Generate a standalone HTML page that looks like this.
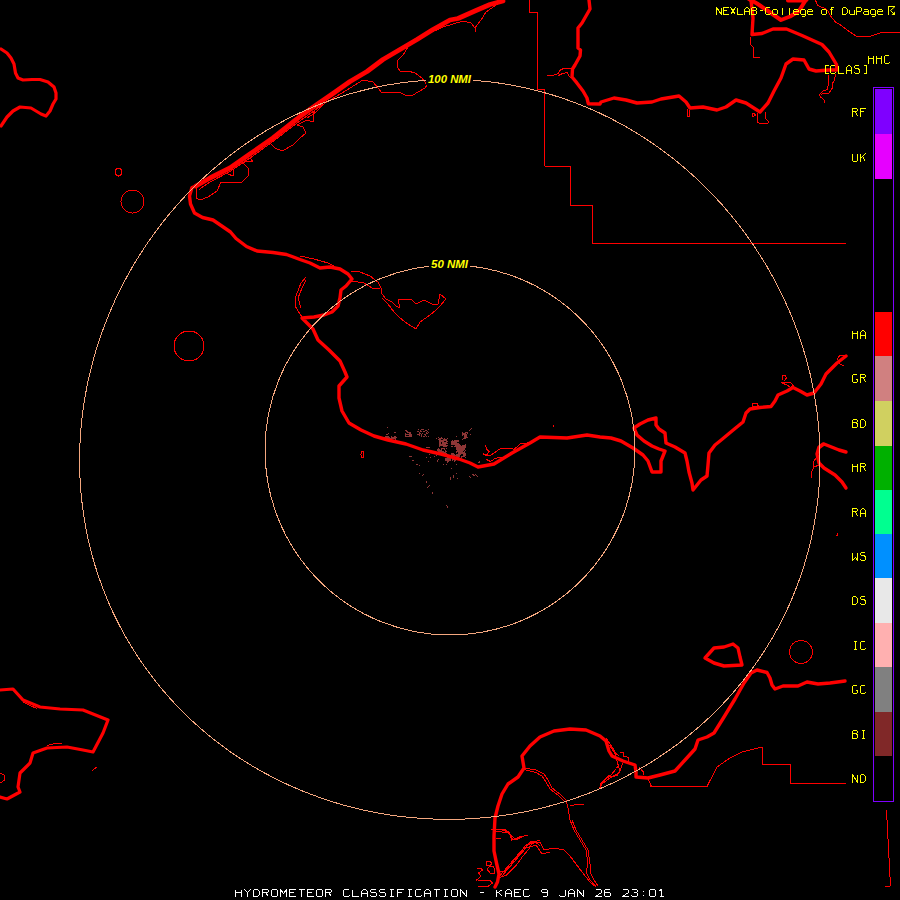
<!DOCTYPE html>
<html><head><meta charset="utf-8">
<style>
html,body{margin:0;padding:0;background:#000;width:900px;height:900px;overflow:hidden}
svg{display:block}
.tk{fill:none;stroke:#ff0000;stroke-width:3.4;stroke-linejoin:round;stroke-linecap:round}
.tn{fill:none;stroke:#ff0000;stroke-width:1;stroke-linejoin:round;shape-rendering:crispEdges}
</style></head><body>
<svg width="900" height="900" viewBox="0 0 900 900">
<rect width="900" height="900" fill="#000"/>
<!-- radar echoes -->
<g id="echo" fill="#8e3636"><rect x="439" y="439" width="2" height="7"/><rect x="441" y="440" width="3" height="2"/><rect x="442" y="442" width="4" height="4"/><rect x="444" y="439" width="2" height="2"/><rect x="446" y="441" width="1" height="3"/><rect x="440" y="444" width="6" height="2"/><rect x="443" y="446" width="4" height="1"/><rect x="451" y="441" width="6" height="2"/><rect x="452" y="443" width="5" height="2"/><rect x="454" y="440" width="2" height="1"/><rect x="455" y="445" width="2" height="2"/><rect x="457" y="441" width="1" height="1"/><rect x="456" y="445" width="5" height="3"/><rect x="457" y="448" width="7" height="3"/><rect x="458" y="451" width="5" height="3"/><rect x="456" y="454" width="4" height="3"/><rect x="460" y="446" width="4" height="2"/><rect x="463" y="448" width="2" height="2"/><rect x="459" y="449" width="2" height="2"/><rect x="437" y="449" width="3" height="2"/><rect x="439" y="450" width="3" height="2"/><rect x="441" y="451" width="3" height="2"/><rect x="443" y="452" width="3" height="2"/><rect x="445" y="453" width="2" height="1"/><rect x="451" y="453" width="3" height="3"/><rect x="453" y="454" width="2" height="2"/><rect x="445" y="458" width="2" height="3"/><rect x="447" y="457" width="1" height="4"/><rect x="448" y="459" width="1" height="2"/><rect x="450" y="458" width="1" height="3"/><rect x="452" y="458" width="1" height="3"/><rect x="454" y="458" width="1" height="2"/><rect x="463" y="433" width="3" height="2"/><rect x="464" y="435" width="2" height="3"/><rect x="465" y="432" width="1" height="1"/><rect x="464" y="438" width="1" height="1"/><rect x="469" y="430" width="1" height="1"/><rect x="470" y="429" width="1" height="1"/><rect x="471" y="428" width="1" height="1"/><rect x="470" y="434" width="1" height="1"/><rect x="426" y="432" width="1" height="2"/><rect x="427" y="431" width="1" height="1"/><rect x="436" y="438" width="1" height="1"/><rect x="438" y="437" width="1" height="1"/><rect x="441" y="437" width="1" height="1"/><rect x="456" y="436" width="1" height="1"/><rect x="462" y="439" width="1" height="1"/><rect x="426" y="457" width="1" height="1"/><rect x="430" y="457" width="1" height="1"/><rect x="428" y="461" width="1" height="1"/><rect x="429" y="454" width="1" height="1"/><rect x="434" y="456" width="1" height="1"/><rect x="436" y="455" width="1" height="1"/><rect x="437" y="460" width="1" height="2"/><rect x="438" y="459" width="1" height="1"/><rect x="443" y="464" width="1" height="1"/><rect x="446" y="464" width="1" height="1"/><rect x="451" y="468" width="1" height="1"/><rect x="456" y="464" width="1" height="1"/><rect x="456" y="473" width="1" height="1"/><rect x="453" y="475" width="1" height="3"/><rect x="450" y="477" width="1" height="3"/><rect x="457" y="478" width="1" height="1"/><rect x="470" y="477" width="1" height="1"/><rect x="473" y="474" width="1" height="1"/><rect x="474" y="475" width="1" height="1"/><rect x="476" y="475" width="1" height="1"/><rect x="477" y="476" width="1" height="1"/><rect x="478" y="462" width="2" height="1"/><rect x="479" y="461" width="1" height="1"/><rect x="387" y="427" width="1" height="1"/><rect x="386" y="434" width="2" height="1"/><rect x="388" y="433" width="1" height="1"/><rect x="388" y="436" width="1" height="1"/><rect x="384" y="437" width="4" height="2"/><rect x="394" y="432" width="2" height="1"/><rect x="392" y="437" width="3" height="2"/><rect x="394" y="438" width="2" height="1"/><rect x="405" y="430" width="2" height="1"/><rect x="406" y="431" width="2" height="1"/><rect x="407" y="432" width="3" height="1"/><rect x="405" y="434" width="6" height="1"/><rect x="409" y="433" width="2" height="3"/><rect x="407" y="436" width="4" height="1"/><rect x="411" y="436" width="1" height="1"/><rect x="417" y="431" width="2" height="1"/><rect x="419" y="432" width="1" height="1"/><rect x="420" y="433" width="1" height="1"/><rect x="419" y="434" width="1" height="1"/><rect x="421" y="436" width="1" height="1"/><rect x="423" y="429" width="1" height="1"/><rect x="422" y="433" width="1" height="1"/><rect x="424" y="431" width="1" height="1"/><rect x="425" y="430" width="1" height="1"/><rect x="426" y="432" width="1" height="1"/><rect x="425" y="434" width="1" height="1"/><rect x="427" y="433" width="1" height="1"/><rect x="428" y="432" width="1" height="1"/><rect x="436" y="438" width="1" height="1"/><rect x="438" y="439" width="1" height="1"/><rect x="439" y="442" width="1" height="3"/><rect x="426" y="447" width="4" height="1"/><rect x="437" y="450" width="3" height="1"/><rect x="409" y="456" width="3" height="1"/><rect x="412" y="460" width="2" height="1"/><rect x="416" y="464" width="2" height="1"/><rect x="419" y="465" width="1" height="1"/><rect x="419" y="473" width="1" height="1"/><rect x="422" y="475" width="1" height="1"/><rect x="423" y="474" width="1" height="1"/><rect x="426" y="481" width="1" height="2"/><rect x="427" y="487" width="1" height="1"/><rect x="428" y="486" width="1" height="1"/><rect x="429" y="485" width="1" height="1"/><rect x="432" y="492" width="1" height="2"/><rect x="446" y="505" width="1" height="1"/><rect x="447" y="506" width="1" height="2"/><rect x="450" y="477" width="1" height="3"/><rect x="453" y="475" width="1" height="3"/><rect x="456" y="473" width="1" height="1"/><rect x="457" y="478" width="1" height="1"/><rect x="469" y="476" width="1" height="1"/><rect x="470" y="477" width="1" height="1"/><rect x="472" y="474" width="1" height="1"/><rect x="473" y="475" width="1" height="1"/><rect x="475" y="474" width="1" height="1"/><rect x="476" y="475" width="1" height="1"/><rect x="553" y="425" width="1" height="2"/><rect x="439" y="438" width="1" height="1"/><rect x="439" y="439" width="1" height="1"/><rect x="439" y="440" width="1" height="1"/><rect x="439" y="443" width="1" height="1"/><rect x="439" y="444" width="1" height="1"/><rect x="439" y="446" width="1" height="1"/><rect x="440" y="438" width="1" height="1"/><rect x="440" y="440" width="1" height="1"/><rect x="440" y="442" width="1" height="1"/><rect x="440" y="444" width="1" height="1"/><rect x="441" y="438" width="1" height="1"/><rect x="441" y="441" width="1" height="1"/><rect x="441" y="444" width="1" height="1"/><rect x="441" y="445" width="1" height="1"/><rect x="442" y="438" width="1" height="1"/><rect x="442" y="443" width="1" height="1"/><rect x="442" y="445" width="1" height="1"/><rect x="443" y="439" width="1" height="1"/><rect x="443" y="440" width="1" height="1"/><rect x="443" y="441" width="1" height="1"/><rect x="443" y="443" width="1" height="1"/><rect x="443" y="445" width="1" height="1"/><rect x="443" y="446" width="1" height="1"/><rect x="444" y="438" width="1" height="1"/><rect x="444" y="439" width="1" height="1"/><rect x="445" y="439" width="1" height="1"/><rect x="445" y="445" width="1" height="1"/><rect x="446" y="439" width="1" height="1"/><rect x="446" y="440" width="1" height="1"/><rect x="446" y="443" width="1" height="1"/><rect x="446" y="445" width="1" height="1"/><rect x="446" y="446" width="1" height="1"/><rect x="447" y="438" width="1" height="1"/><rect x="447" y="441" width="1" height="1"/><rect x="447" y="443" width="1" height="1"/><rect x="447" y="445" width="1" height="1"/><rect x="451" y="441" width="1" height="1"/><rect x="451" y="443" width="1" height="1"/><rect x="451" y="444" width="1" height="1"/><rect x="451" y="446" width="1" height="1"/><rect x="452" y="440" width="1" height="1"/><rect x="452" y="441" width="1" height="1"/><rect x="452" y="443" width="1" height="1"/><rect x="452" y="444" width="1" height="1"/><rect x="452" y="446" width="1" height="1"/><rect x="453" y="442" width="1" height="1"/><rect x="453" y="443" width="1" height="1"/><rect x="453" y="444" width="1" height="1"/><rect x="454" y="443" width="1" height="1"/><rect x="454" y="444" width="1" height="1"/><rect x="454" y="446" width="1" height="1"/><rect x="455" y="440" width="1" height="1"/><rect x="455" y="442" width="1" height="1"/><rect x="455" y="443" width="1" height="1"/><rect x="455" y="444" width="1" height="1"/><rect x="455" y="445" width="1" height="1"/><rect x="456" y="440" width="1" height="1"/><rect x="456" y="443" width="1" height="1"/><rect x="456" y="445" width="1" height="1"/><rect x="457" y="440" width="1" height="1"/><rect x="457" y="443" width="1" height="1"/><rect x="457" y="444" width="1" height="1"/><rect x="458" y="440" width="1" height="1"/><rect x="458" y="441" width="1" height="1"/><rect x="458" y="443" width="1" height="1"/><rect x="458" y="444" width="1" height="1"/><rect x="458" y="445" width="1" height="1"/><rect x="458" y="446" width="1" height="1"/><rect x="456" y="444" width="1" height="1"/><rect x="456" y="445" width="1" height="1"/><rect x="456" y="446" width="1" height="1"/><rect x="456" y="448" width="1" height="1"/><rect x="456" y="449" width="1" height="1"/><rect x="456" y="451" width="1" height="1"/><rect x="456" y="452" width="1" height="1"/><rect x="456" y="454" width="1" height="1"/><rect x="456" y="455" width="1" height="1"/><rect x="456" y="456" width="1" height="1"/><rect x="457" y="444" width="1" height="1"/><rect x="457" y="445" width="1" height="1"/><rect x="457" y="446" width="1" height="1"/><rect x="457" y="448" width="1" height="1"/><rect x="457" y="450" width="1" height="1"/><rect x="457" y="451" width="1" height="1"/><rect x="457" y="454" width="1" height="1"/><rect x="457" y="455" width="1" height="1"/><rect x="457" y="456" width="1" height="1"/><rect x="457" y="457" width="1" height="1"/><rect x="458" y="444" width="1" height="1"/><rect x="458" y="447" width="1" height="1"/><rect x="458" y="448" width="1" height="1"/><rect x="458" y="452" width="1" height="1"/><rect x="458" y="453" width="1" height="1"/><rect x="458" y="454" width="1" height="1"/><rect x="458" y="456" width="1" height="1"/><rect x="458" y="457" width="1" height="1"/><rect x="459" y="444" width="1" height="1"/><rect x="459" y="445" width="1" height="1"/><rect x="459" y="446" width="1" height="1"/><rect x="459" y="448" width="1" height="1"/><rect x="459" y="449" width="1" height="1"/><rect x="459" y="453" width="1" height="1"/><rect x="459" y="456" width="1" height="1"/><rect x="460" y="446" width="1" height="1"/><rect x="460" y="447" width="1" height="1"/><rect x="460" y="448" width="1" height="1"/><rect x="460" y="449" width="1" height="1"/><rect x="460" y="450" width="1" height="1"/><rect x="460" y="451" width="1" height="1"/><rect x="460" y="452" width="1" height="1"/><rect x="460" y="454" width="1" height="1"/><rect x="461" y="446" width="1" height="1"/><rect x="461" y="447" width="1" height="1"/><rect x="461" y="449" width="1" height="1"/><rect x="461" y="450" width="1" height="1"/><rect x="461" y="452" width="1" height="1"/><rect x="461" y="453" width="1" height="1"/><rect x="461" y="456" width="1" height="1"/><rect x="461" y="457" width="1" height="1"/><rect x="462" y="445" width="1" height="1"/><rect x="462" y="447" width="1" height="1"/><rect x="462" y="448" width="1" height="1"/><rect x="462" y="449" width="1" height="1"/><rect x="462" y="451" width="1" height="1"/><rect x="462" y="456" width="1" height="1"/><rect x="463" y="445" width="1" height="1"/><rect x="463" y="446" width="1" height="1"/><rect x="463" y="447" width="1" height="1"/><rect x="463" y="448" width="1" height="1"/><rect x="463" y="449" width="1" height="1"/><rect x="463" y="450" width="1" height="1"/><rect x="463" y="452" width="1" height="1"/><rect x="463" y="453" width="1" height="1"/><rect x="463" y="454" width="1" height="1"/><rect x="463" y="455" width="1" height="1"/><rect x="463" y="456" width="1" height="1"/><rect x="464" y="445" width="1" height="1"/><rect x="464" y="446" width="1" height="1"/><rect x="464" y="447" width="1" height="1"/><rect x="464" y="448" width="1" height="1"/><rect x="464" y="449" width="1" height="1"/><rect x="464" y="451" width="1" height="1"/><rect x="464" y="452" width="1" height="1"/><rect x="464" y="453" width="1" height="1"/><rect x="464" y="454" width="1" height="1"/><rect x="464" y="455" width="1" height="1"/><rect x="464" y="456" width="1" height="1"/><rect x="465" y="444" width="1" height="1"/><rect x="465" y="445" width="1" height="1"/><rect x="465" y="446" width="1" height="1"/><rect x="465" y="447" width="1" height="1"/><rect x="465" y="450" width="1" height="1"/><rect x="465" y="453" width="1" height="1"/><rect x="465" y="454" width="1" height="1"/><rect x="465" y="455" width="1" height="1"/><rect x="465" y="457" width="1" height="1"/><rect x="437" y="450" width="1" height="1"/><rect x="437" y="453" width="1" height="1"/><rect x="437" y="454" width="1" height="1"/><rect x="438" y="448" width="1" height="1"/><rect x="438" y="451" width="1" height="1"/><rect x="438" y="454" width="1" height="1"/><rect x="439" y="449" width="1" height="1"/><rect x="440" y="450" width="1" height="1"/><rect x="440" y="452" width="1" height="1"/><rect x="440" y="453" width="1" height="1"/><rect x="441" y="448" width="1" height="1"/><rect x="441" y="449" width="1" height="1"/><rect x="441" y="450" width="1" height="1"/><rect x="441" y="452" width="1" height="1"/><rect x="441" y="453" width="1" height="1"/><rect x="442" y="448" width="1" height="1"/><rect x="443" y="448" width="1" height="1"/><rect x="443" y="452" width="1" height="1"/><rect x="444" y="448" width="1" height="1"/><rect x="444" y="449" width="1" height="1"/><rect x="444" y="452" width="1" height="1"/><rect x="444" y="453" width="1" height="1"/><rect x="444" y="454" width="1" height="1"/><rect x="445" y="450" width="1" height="1"/><rect x="445" y="451" width="1" height="1"/><rect x="445" y="452" width="1" height="1"/><rect x="445" y="453" width="1" height="1"/><rect x="445" y="454" width="1" height="1"/><rect x="446" y="448" width="1" height="1"/><rect x="446" y="451" width="1" height="1"/><rect x="446" y="453" width="1" height="1"/><rect x="447" y="454" width="1" height="1"/><rect x="447" y="455" width="1" height="1"/><rect x="447" y="461" width="1" height="1"/><rect x="447" y="462" width="1" height="1"/><rect x="448" y="455" width="1" height="1"/><rect x="448" y="457" width="1" height="1"/><rect x="448" y="458" width="1" height="1"/><rect x="448" y="461" width="1" height="1"/><rect x="449" y="458" width="1" height="1"/><rect x="449" y="459" width="1" height="1"/><rect x="449" y="460" width="1" height="1"/><rect x="450" y="455" width="1" height="1"/><rect x="450" y="457" width="1" height="1"/><rect x="450" y="459" width="1" height="1"/><rect x="452" y="458" width="1" height="1"/><rect x="452" y="459" width="1" height="1"/><rect x="453" y="456" width="1" height="1"/><rect x="453" y="457" width="1" height="1"/><rect x="453" y="458" width="1" height="1"/><rect x="453" y="459" width="1" height="1"/><rect x="454" y="455" width="1" height="1"/><rect x="454" y="457" width="1" height="1"/><rect x="454" y="460" width="1" height="1"/><rect x="454" y="461" width="1" height="1"/><rect x="455" y="455" width="1" height="1"/><rect x="455" y="459" width="1" height="1"/><rect x="455" y="460" width="1" height="1"/><rect x="405" y="430" width="1" height="1"/><rect x="405" y="433" width="1" height="1"/><rect x="405" y="435" width="1" height="1"/><rect x="405" y="436" width="1" height="1"/><rect x="406" y="431" width="1" height="1"/><rect x="406" y="434" width="1" height="1"/><rect x="406" y="436" width="1" height="1"/><rect x="407" y="432" width="1" height="1"/><rect x="407" y="436" width="1" height="1"/><rect x="408" y="434" width="1" height="1"/><rect x="408" y="436" width="1" height="1"/><rect x="409" y="433" width="1" height="1"/><rect x="409" y="436" width="1" height="1"/><rect x="410" y="432" width="1" height="1"/><rect x="410" y="434" width="1" height="1"/><rect x="410" y="435" width="1" height="1"/><rect x="411" y="434" width="1" height="1"/><rect x="411" y="435" width="1" height="1"/><rect x="411" y="436" width="1" height="1"/><rect x="417" y="434" width="1" height="1"/><rect x="418" y="429" width="1" height="1"/><rect x="418" y="431" width="1" height="1"/><rect x="418" y="434" width="1" height="1"/><rect x="419" y="432" width="1" height="1"/><rect x="419" y="433" width="1" height="1"/><rect x="419" y="434" width="1" height="1"/><rect x="419" y="435" width="1" height="1"/><rect x="420" y="430" width="1" height="1"/><rect x="420" y="431" width="1" height="1"/><rect x="421" y="429" width="1" height="1"/><rect x="421" y="431" width="1" height="1"/><rect x="421" y="434" width="1" height="1"/><rect x="421" y="435" width="1" height="1"/><rect x="422" y="429" width="1" height="1"/><rect x="423" y="431" width="1" height="1"/><rect x="423" y="436" width="1" height="1"/><rect x="424" y="434" width="1" height="1"/><rect x="424" y="436" width="1" height="1"/><rect x="425" y="435" width="1" height="1"/><rect x="426" y="430" width="1" height="1"/><rect x="426" y="432" width="1" height="1"/><rect x="426" y="433" width="1" height="1"/><rect x="426" y="436" width="1" height="1"/><rect x="427" y="431" width="1" height="1"/><rect x="428" y="429" width="1" height="1"/><rect x="428" y="436" width="1" height="1"/><rect x="462" y="432" width="1" height="1"/><rect x="462" y="433" width="1" height="1"/><rect x="462" y="434" width="1" height="1"/><rect x="462" y="435" width="1" height="1"/><rect x="463" y="434" width="1" height="1"/><rect x="463" y="438" width="1" height="1"/><rect x="464" y="434" width="1" height="1"/><rect x="464" y="435" width="1" height="1"/><rect x="464" y="438" width="1" height="1"/><rect x="465" y="432" width="1" height="1"/><rect x="465" y="433" width="1" height="1"/><rect x="465" y="435" width="1" height="1"/><rect x="465" y="437" width="1" height="1"/><rect x="465" y="438" width="1" height="1"/><rect x="466" y="432" width="1" height="1"/><rect x="466" y="434" width="1" height="1"/><rect x="466" y="435" width="1" height="1"/><rect x="466" y="436" width="1" height="1"/><rect x="466" y="437" width="1" height="1"/><rect x="467" y="432" width="1" height="1"/><rect x="467" y="433" width="1" height="1"/><rect x="467" y="437" width="1" height="1"/><rect x="384" y="437" width="1" height="1"/><rect x="384" y="439" width="1" height="1"/><rect x="385" y="436" width="1" height="1"/><rect x="385" y="438" width="1" height="1"/><rect x="386" y="436" width="1" height="1"/><rect x="386" y="437" width="1" height="1"/><rect x="386" y="438" width="1" height="1"/><rect x="387" y="436" width="1" height="1"/><rect x="388" y="436" width="1" height="1"/><rect x="388" y="437" width="1" height="1"/><rect x="388" y="438" width="1" height="1"/><rect x="389" y="437" width="1" height="1"/><rect x="389" y="438" width="1" height="1"/><rect x="390" y="438" width="1" height="1"/><rect x="390" y="439" width="1" height="1"/><rect x="391" y="436" width="1" height="1"/><rect x="391" y="437" width="1" height="1"/><rect x="391" y="438" width="1" height="1"/><rect x="391" y="439" width="1" height="1"/><rect x="392" y="438" width="1" height="1"/><rect x="394" y="436" width="1" height="1"/><rect x="394" y="437" width="1" height="1"/><rect x="395" y="436" width="1" height="1"/><rect x="395" y="437" width="1" height="1"/><rect x="395" y="439" width="1" height="1"/><rect x="396" y="437" width="1" height="1"/></g>
<!-- thin lines -->
<g class="tn" id="thin">
<path d="M307,118 L315,113 L325,103 L342,93 L363,80 L373,82 L378,88 L382,93 L400,92.5 L407,96 L413,95 L418,92 L425,88 L427,85 L422,78 L415,73 L408,71 L400,71 L397.5,67 L398,60 L403,55 L408,47 L417,40 L430,33 L443,27 L463,21 L471,23 L475,28 L475,32 M475,28 L481,20 L486,12 L499,3"/>
<path d="M197,185 L196,198 L200,200 L208,197 L217,191 L221,182 L228,182.5 L242,182 L248,176 L248,168 L243,163 L247,161 L253,162 L250,157.5"/>
<path d="M227,168 L233,170 L233,176 L228,174 Z"/>
<path d="M270,143 L275,148 L282,151 L293,145 L300,138 L306,133 L303,127 L297,125 L307,120 L313,122 L313,115 L315,110 L323,103"/>
<path d="M306,277 L301,283 L296,296 L295,306 L300,314 L302,317 M301,308 L298,298 L302,288 L306,280"/>
<path d="M300,256 L314,259 L328,263 L334,266"/>
<path d="M351,271 L360,272 L370,276 L378,282 L381,288 L382,294 L386,299 L392,302 L396,306 L400,308 L398,300 L402,299 L412,300 L416,304 L424,300 L432,304 L438,304 L440,294 L446,299 L440,306 L436,310 L430,315 L420,322 L416,329 L408,324 L400,318 L394,312 L388,304 L382,298"/>
<path d="M351,281 L364,283 L372,288 L380,289"/>
<path d="M529.5,0 V12.5 H537.5 V89.5 H544.5 V166 H570.5 V205.5 H592.5 V243.5 H846"/>
<path d="M547,75.5 L553,75.5 L558.5,73.5 L559.5,70.5 L562.5,69 L572,68.5 M558.5,75.5 L562.5,73.5 L567,72.5 L569.5,76.5 L570.5,78"/>
<path d="M815.5,0 L817.5,5.5 L824,8 L828,11 L831,16.5 L835.5,22 L840,24.5 L847,30 L856,36 L868,37 L880,33 L900,32"/>
<path d="M751,37 L750,44 L754,48 L753,57 L760,57"/>
<circle cx="132.5" cy="201.5" r="11.5"/>
<circle cx="189" cy="346" r="15"/>
<circle cx="801" cy="652" r="11.5"/>
<ellipse cx="118.5" cy="172" rx="3" ry="4"/>
<ellipse cx="362.5" cy="454.5" rx="1.5" ry="3"/>
<path d="M524,768 L536,770 L544,774 L548,780 L552,788 L560,794 L566,800 L568,808 L570,820 L574,830 L580,840 L586,850 L588,864 L586,872 L590,880 L596,886"/>
<path d="M570,806 L578,804 L584,804"/>
<path d="M496,829 L506,830 L512,836 L516,840 L524,836 L528,835"/>
<path d="M498,878 L510,864 L522,850 L532,842 L540,842 L544,850 L554,848 L564,850 L570,856 L576,864 L582,872 L590,882 L596,887"/>
<path d="M502,876 L514,862 L526,848 L536,845 L542,854 L550,852"/>
<path d="M606,738 L614,750 L620,772 L610,778 L602,784 L600,788"/>
<path d="M650,787 L707,786.5 L717,767 L730,758 L742,752 L762,747 L763,764.5 L790.5,764.5 L791,783.5 L846,783.5"/>
<path d="M886.5,810 L890.5,886 L885,887"/>
</g>
<g class="tn" id="thin2">
<path d="M524,769.5 L536,772.5 L542,776 L546,782 L550,789 L558,795 L564,801"/>
<path d="M572,820 L576,830 L582,840 L588,850 L590,864 L590,872 L594,880 L598,886"/>
<path d="M199,189.5 L210,182 L230,171.5 L250,158 L273,141.5 L297,123 L323,104.5"/>

<path d="M23,702 L30,705.5 L37,708.5"/>
<path d="M47,745.5 L55,743.5 L62,743.5"/>
<path d="M846,356 L840,355 L837.5,359 L840,364 L844,366"/>
<path d="M648,779 L651.5,786.5"/>

<path d="M828,75 L829,81 L828,86 L827,89.5 L823,91 L819.5,94.5 L820.5,97 L824,99.5 L824.5,103.5 M835.5,74.5 L834.5,80.5 L832,84 L832,88.5 L829,93 L823,93.5 L821,95"/>
<path d="M688,109 L687,116 L689.5,116 L690,110"/>
<path d="M758,113.5 L757.5,122 L760.5,124 L768,123 L768,121 L765,117.5 L765,112 M752,114 L754,113 L755.5,115 L753,116.5 Z"/>
<path d="M485,445 L487,449.5 L489,451.5 L486,456 L483.5,454 L487,455.5 L490.5,455.5 L500.5,448.5 L511.5,448.5 L514,449.5 L520.5,443.5 L526,443.5 L531.5,441.5 M486.5,459.5 L490.5,461.5 L495,458.5 L501.5,457"/>
<path d="M782,380 L782.5,376 L785,375 L786.5,378 L784,381 M781.5,383 L790.5,382.5 L793,385.5 L790.5,387.5 L786.5,384.5 L782.5,383.5"/>
<path d="M752,404 L757,403.5 L758.5,406.5 L753,406.5 Z"/>
<path d="M609.5,745 L613,750.5 L616.5,754 L619,756 M620.5,752.5 L623,752 L623,756 L628.5,757.5 L629,761 L624,761 M639,767 L644,772.5 L643.5,775.5"/>
<path d="M622.5,763.5 L620.5,770 L617.5,775 L611.5,777 L609,775.5 L604.5,780 L601,783.5 L599.5,789.5 M619,764 L616.5,768.5 L611,775 L602.5,781.5 L600,787"/>
<path d="M491.5,829.5 L502,830 L509,832 L511,835.5 L513,840 L516.5,838.5 L520.5,836.5 L528.5,835.5 M495.5,831.5 L507.5,832.5 L510,835 L512,840.5"/>
<path d="M496,838 L500.5,838"/>
<path d="M499.5,872 L505,871.5 L510.5,866 L513.5,860.5 L520.5,853.5 L524.5,846.5 L530.5,842 L540,840.5 M499.5,877.5 L506.5,875 L516.5,865 L523,856 L529,849 L532,843.5 L536,842.5 L540,845.5"/>
<path d="M486,862 L490,861 L492,864 L489,866 L486,865 Z M489,867 L493,866 L495,870 L494,874 L490,873 L487,869 Z"/>
<path d="M477,869 L481,868 L482.5,870 L478.5,873 L481,876 L478,879 L476,880.5 M478,881 L484,880.5 L490,880.5 L492.5,883 L488,886.5 L482,886.5 L478,887"/>
<path d="M553.5,425 L553.5,427"/>
<path d="M92,771 L96.5,767"/>
<path d="M0.5,773 L4,775 L4.5,780 L0.5,783"/>
<path d="M811.5,478 L812,471 L814,467 L813.5,462 L816,458 L816.5,455 M814,467 L819,465"/>
<path d="M837,533 L838,535.5 L836.5,536"/>
</g>
<!-- thick coastlines -->
<g class="tk" id="thick">
<path style="stroke-width:3.2" d="M1,49 L7,53 L11,58 L14,64 L15.5,73 L18,78 L23,80 L32,79.5 L40,79.5 L48,82 L54,87 L56,93 L56,99 L53,104 L50,111 L46,116 L41,114 L31,108 L20,107 L13,111 L7,117 L1,126"/>
<path style="stroke-width:4.8" d="M503,1 L490,4.5 L476,10.5 L458,18.5 L450,20 L433,29.5 L417,39.5 L400,49.5 L383,59.5 L367,71.5 L350,81.5 L333,93.5 L317,104.5 L300,116.5 L297,119 L273,138 L250,154 L230,168 L210,178 L196,186"/>
<path d="M196,186 L192,187.5 L189.5,196 L190.5,204 L194.5,213 L202.5,217.5 L213,220 L222.5,226.5 L230.5,232 L236,238.5 L246.5,246.5 L257,251 L273,252.5 L286.5,254.5 L300,259.5 L310,263 L320,268 L330,267 L340,269 L348,274 L352,279 L346,286 L341,290 L340,298 L338,306 L332,312 L324,315 L314,317 L302,318 L304,320 L310,326 L313,329 L318,340 L329,350 L340,361 L345,372 L347,377 L339,386 L339,398 L342,411 L349,423 L361,430 L374,436 L388,440 L406,444 L423,450 L441,454 L459,459 L470,463 L478,467 L494,464 L512,453 L530,443 L540,437 L567,438 L587,435 L600,437 L611,438 L621,441 L633,448 L643,455 L648,461 L652,472 L661,472 L661,461 L665,451 L659,449 L652,446 L644,441 L637,435 L634,428 L640,424 L648,420 L656,418 L656,425 L659,429 L665,433 L666,443 L675,447 L685,453 L687,461 L689,472 L692,483 L693,490 L701,480 L707,476 L708,465 L709,453 L715,445 L720,441 L732,431 L743,422 L746,413 L750,409 L760,407.5 L771,406.5 L775,401 L778,395 L787,391 L793,387.5 L800,391 L807,395 L814,393 L821,384 L826,374 L837,363 L846,356"/>
<path d="M589,0 L590,9 L582,23 L578,28 L578,48 L580.5,50 L580,56 L575,65 L572.5,69 L572,77 L576.7,82.7 L583,91 L587,98 L588.3,103.7 L600,104 L601,102 L614,98 L626,100 L637,103 L652,102 L661,99 L679,96 L686,102 L690,108 L703,107 L717,110 L726,107 L736,100 L746,103 L760,112 L768,103 L774,91 L781,78 L786,64 L793,59 L804,60 L809,69 L816,71 L829,70 L837,70 L836.5,64.5 L829,52 L822,44.5 L802,35.5 L786.5,29 L773,29 L762,33.5 L752,34.5 L753,18 L751,0"/>
<path style="stroke-width:4" d="M749,-1 L757,3.5 L768,11 L781,20 L790,16.5 L799,11 L804.5,2 L807,-1 M788,0.5 L806,0.5"/>
<path d="M820,447 L824,444 L839,450 L846,452"/>
<path d="M823,444 L819,447 L817,454 L819,463 L824,468 L835,475 L842,482 L846,488"/>
<path d="M495,887 L497.5,882 L499,874 L496.5,863 L494,851 L494,836 L495,818 L498,806 L502,794 L508,784 L518,777 L524,768 L522,756 L530,746 L540,737 L554,731 L570,729 L586,730 L600,736 L606,741 L609,751 L612,756 L623,761 L635,765 L636,772 L636,777 L648,778 L660,775 L675,771 L685,760 L695,749 L698,740 L707,737 L714,733 L724,717 L735,699 L744,683 L751,673 L757,670 L767,672.5 L770,678 L772,685 L775,689 L783,686 L798,686 L807,682 L818,684 L830,683 L845,681"/>
<path d="M705,658 L714,648 L724,647 L733,644 L738,648 L740,657 L742,665 L724,666 L714,663 Z"/>
<path style="stroke-width:3.2" d="M0,690 L13,689 L23,700 L40,707 L60,709 L83,710 L108,720 L103,733 L93,752 L83,750 L67,747 L47,748 L33,753 L30,763 L20,773 L18,787 L20,792 L7,799 L0,797"/>
</g>
<!-- range rings -->
<g fill="none" stroke="#f4a77f" stroke-width="1" shape-rendering="crispEdges">
<path d="M79.7,450.0 L80.3,437.1 L81.3,424.2 L82.8,411.4 L84.7,398.7 L87.0,386.0 L89.8,373.4 L93.0,361.0 L96.5,348.6 L100.5,336.4 L104.9,324.4 L109.7,312.5 L114.8,300.8 L120.4,289.2 L126.3,277.9 L132.5,266.7 L139.2,255.8 L146.1,245.0 L153.5,234.6 L161.1,224.3 L169.1,214.3 L177.4,204.6 L186.1,195.1 L195.0,186.0 L204.3,177.1 L213.9,168.6 L223.7,160.4 L233.8,152.5 L244.2,144.9 L254.9,137.7 L265.8,130.9 L276.9,124.5 L288.3,118.4 L299.9,112.8 L311.6,107.6 L323.6,102.8 L335.8,98.4 L348.0,94.4 L360.5,91.0 L373.0,87.9 L385.7,85.3 L398.5,83.2 L411.3,81.6 L424.2,80.4 L437.1,79.7 L450.0,79.5 L462.9,79.8 L475.8,80.5 L488.7,81.7 L501.5,83.4 L514.3,85.6 L526.9,88.2 L539.4,91.3 L551.9,94.8 L564.1,98.8 L576.2,103.2 L588.2,108.0 L599.9,113.2 L611.5,118.9 L622.8,124.9 L634.0,131.4 L644.8,138.2 L655.5,145.4 L665.8,152.9 L676.0,160.8 L685.8,169.0 L695.3,177.5 L704.6,186.4 L713.6,195.5 L722.2,204.9 L730.5,214.6 L738.5,224.6 L746.2,234.8 L753.5,245.3 L760.5,256.0 L767.2,266.9 L773.4,278.0 L779.4,289.4 L784.9,300.9 L790.1,312.6 L794.9,324.5 L799.2,336.5 L803.2,348.7 L806.8,361.0 L810.0,373.5 L812.7,386.0 L815.0,398.7 L816.9,411.4 L818.4,424.2 L819.4,437.1 L819.9,450.0 L820.0,462.9 L819.7,475.9 L818.9,488.8 L817.6,501.7 L815.8,514.5 L813.6,527.3 L811.0,540.0 L807.8,552.6 L804.2,565.1 L800.2,577.4 L795.6,589.6 L790.7,601.7 L785.3,613.5 L779.4,625.2 L773.1,636.6 L766.4,647.7 L759.3,658.6 L751.8,669.3 L743.9,679.7 L735.7,689.7 L727.0,699.5 L718.1,708.9 L708.8,718.0 L699.1,726.7 L689.2,735.1 L679.0,743.1 L668.5,750.7 L657.7,758.0 L646.8,764.9 L635.5,771.3 L624.1,777.4 L612.5,783.1 L600.7,788.4 L588.7,793.3 L576.6,797.7 L564.3,801.8 L551.9,805.4 L539.4,808.6 L526.8,811.4 L514.1,813.8 L501.4,815.7 L488.6,817.3 L475.8,818.4 L462.9,819.1 L450.0,819.4 L437.1,819.2 L424.2,818.6 L411.4,817.6 L398.5,816.2 L385.8,814.4 L373.0,812.1 L360.4,809.4 L347.8,806.3 L335.4,802.7 L323.1,798.7 L310.9,794.3 L298.8,789.5 L287.0,784.3 L275.3,778.6 L263.8,772.6 L252.5,766.1 L241.4,759.2 L230.6,752.0 L220.1,744.3 L209.8,736.3 L199.8,727.8 L190.2,719.1 L180.8,709.9 L171.8,700.4 L163.2,690.6 L154.9,680.5 L147.1,670.1 L139.6,659.4 L132.5,648.4 L125.8,637.2 L119.6,625.7 L113.7,614.0 L108.4,602.1 L103.5,590.0 L99.0,577.8 L95.0,565.4 L91.4,552.8 L88.3,540.2 L85.7,527.4 L83.6,514.6 L81.9,501.7 L80.6,488.8 L79.9,475.9 L79.5,462.9Z"/>
<circle cx="450" cy="450" r="185"/>
</g>
<rect x="426" y="74" width="47" height="11" fill="#000"/>
<rect x="429" y="259" width="41" height="10" fill="#000"/>
<text x="428" y="83" font-family="Liberation Sans" font-weight="bold" font-style="italic" font-size="11" fill="#ffff00" textLength="43" lengthAdjust="spacingAndGlyphs">100 NMI</text>
<text x="431" y="268" font-family="Liberation Sans" font-weight="bold" font-style="italic" font-size="11" fill="#ffff00" textLength="37" lengthAdjust="spacingAndGlyphs">50 NMI</text>
<!-- legend -->
<g>
<rect x="873.5" y="87.5" width="20" height="714" fill="none" stroke="#7f00ff" stroke-width="1.2" shape-rendering="crispEdges"/>
<rect x="875" y="89" width="17" height="45" fill="#7f00ff"/>
<rect x="875" y="134" width="17" height="45" fill="#e600ff"/>
<rect x="875" y="312" width="17" height="44" fill="#ff0000"/>
<rect x="875" y="356" width="17" height="45" fill="#d08080"/>
<rect x="875" y="401" width="17" height="45" fill="#d0d060"/>
<rect x="875" y="446" width="17" height="44" fill="#00b000"/>
<rect x="875" y="490" width="17" height="44" fill="#00ff90"/>
<rect x="875" y="534" width="17" height="44" fill="#0090ff"/>
<rect x="875" y="578" width="17" height="45" fill="#e8e8e8"/>
<rect x="875" y="623" width="17" height="44" fill="#ffb0b0"/>
<rect x="875" y="667" width="17" height="45" fill="#808080"/>
<rect x="875" y="712" width="17" height="44" fill="#802828"/>
</g>
<path d="M888.5,6 V15 M888.5,6.5 H895 L890.5,10.5 L894,14" fill="none" stroke="#ffff00" stroke-width="1"/>
<path d="M891.5,15 H895 V11.5 Z" fill="#ffff00"/>
<g id="txt"><g fill="none" stroke="#ffffff" stroke-width="1" shape-rendering="crispEdges"><path d="M235.5,889.5 L235.5,896.5 M241.5,889.5 L241.5,896.5 M235.5,892.5 L241.5,892.5 M244.5,889.5 L247.5,892.5 L250.5,889.5 M247.5,892.5 L247.5,896.5 M253.5,889.5 L257.5,889.5 L259.5,891.5 L259.5,894.5 L257.5,896.5 L253.5,896.5 L253.5,889.5 M262.5,896.5 L262.5,889.5 L267.5,889.5 L268.5,890.5 L268.5,891.5 L267.5,892.5 L262.5,892.5 M265.5,892.5 L268.5,896.5 M272.5,889.5 L276.5,889.5 L277.5,890.5 L277.5,895.5 L276.5,896.5 L272.5,896.5 L271.5,895.5 L271.5,890.5 L272.5,889.5 M280.5,896.5 L280.5,889.5 L283.5,893.5 L286.5,889.5 L286.5,896.5 M295.5,889.5 L289.5,889.5 L289.5,896.5 L295.5,896.5 M289.5,892.5 L293.5,892.5 M298.5,889.5 L304.5,889.5 M301.5,889.5 L301.5,896.5 M313.5,889.5 L307.5,889.5 L307.5,896.5 L313.5,896.5 M307.5,892.5 L311.5,892.5 M317.5,889.5 L321.5,889.5 L322.5,890.5 L322.5,895.5 L321.5,896.5 L317.5,896.5 L316.5,895.5 L316.5,890.5 L317.5,889.5 M325.5,896.5 L325.5,889.5 L330.5,889.5 L331.5,890.5 L331.5,891.5 L330.5,892.5 L325.5,892.5 M328.5,892.5 L331.5,896.5 M349.5,890.5 L348.5,889.5 L344.5,889.5 L343.5,890.5 L343.5,895.5 L344.5,896.5 L348.5,896.5 L349.5,895.5 M352.5,889.5 L352.5,896.5 L358.5,896.5 M361.5,896.5 L361.5,891.5 L363.5,889.5 L365.5,889.5 L367.5,891.5 L367.5,896.5 M361.5,893.5 L367.5,893.5 M376.5,890.5 L375.5,889.5 L371.5,889.5 L370.5,890.5 L370.5,891.5 L371.5,892.5 L375.5,892.5 L376.5,893.5 L376.5,895.5 L375.5,896.5 L371.5,896.5 L370.5,895.5 M385.5,890.5 L384.5,889.5 L380.5,889.5 L379.5,890.5 L379.5,891.5 L380.5,892.5 L384.5,892.5 L385.5,893.5 L385.5,895.5 L384.5,896.5 L380.5,896.5 L379.5,895.5 M389.5,889.5 L393.5,889.5 M391.5,889.5 L391.5,896.5 M389.5,896.5 L393.5,896.5 M403.5,889.5 L397.5,889.5 L397.5,896.5 M397.5,892.5 L401.5,892.5 M407.5,889.5 L411.5,889.5 M409.5,889.5 L409.5,896.5 M407.5,896.5 L411.5,896.5 M421.5,890.5 L420.5,889.5 L416.5,889.5 L415.5,890.5 L415.5,895.5 L416.5,896.5 L420.5,896.5 L421.5,895.5 M424.5,896.5 L424.5,891.5 L426.5,889.5 L428.5,889.5 L430.5,891.5 L430.5,896.5 M424.5,893.5 L430.5,893.5 M433.5,889.5 L439.5,889.5 M436.5,889.5 L436.5,896.5 M443.5,889.5 L447.5,889.5 M445.5,889.5 L445.5,896.5 M443.5,896.5 L447.5,896.5 M452.5,889.5 L456.5,889.5 L457.5,890.5 L457.5,895.5 L456.5,896.5 L452.5,896.5 L451.5,895.5 L451.5,890.5 L452.5,889.5 M460.5,896.5 L460.5,889.5 L466.5,896.5 L466.5,889.5 M479.5,892.5 L483.5,892.5 M496.5,889.5 L496.5,896.5 M502.5,889.5 L496.5,893.5 M498.5,892.5 L502.5,896.5 M505.5,896.5 L505.5,891.5 L507.5,889.5 L509.5,889.5 L511.5,891.5 L511.5,896.5 M505.5,893.5 L511.5,893.5 M520.5,889.5 L514.5,889.5 L514.5,896.5 L520.5,896.5 M514.5,892.5 L518.5,892.5 M529.5,890.5 L528.5,889.5 L524.5,889.5 L523.5,890.5 L523.5,895.5 L524.5,896.5 L528.5,896.5 L529.5,895.5 M547.5,892.5 L542.5,892.5 L541.5,891.5 L541.5,890.5 L542.5,889.5 L546.5,889.5 L547.5,890.5 L547.5,895.5 L546.5,896.5 L542.5,896.5 M565.5,889.5 L565.5,895.5 L564.5,896.5 L560.5,896.5 L559.5,895.5 M568.5,896.5 L568.5,891.5 L570.5,889.5 L572.5,889.5 L574.5,891.5 L574.5,896.5 M568.5,893.5 L574.5,893.5 M577.5,896.5 L577.5,889.5 L583.5,896.5 L583.5,889.5 M595.5,890.5 L596.5,889.5 L600.5,889.5 L601.5,890.5 L601.5,892.5 L595.5,896.5 L601.5,896.5 M609.5,889.5 L605.5,889.5 L604.5,890.5 L604.5,895.5 L605.5,896.5 L609.5,896.5 L610.5,895.5 L610.5,893.5 L609.5,892.5 L604.5,892.5 M622.5,890.5 L623.5,889.5 L627.5,889.5 L628.5,890.5 L628.5,892.5 L622.5,896.5 L628.5,896.5 M631.5,890.5 L632.5,889.5 L636.5,889.5 L637.5,890.5 L637.5,891.5 L636.5,892.5 L633.5,892.5 M636.5,892.5 L637.5,893.5 L637.5,895.5 L636.5,896.5 L632.5,896.5 L631.5,895.5 M650.5,889.5 L654.5,889.5 L655.5,890.5 L655.5,895.5 L654.5,896.5 L650.5,896.5 L649.5,895.5 L649.5,890.5 L650.5,889.5 M659.5,890.5 L661.5,889.5 L661.5,896.5 M659.5,896.5 L663.5,896.5"/><rect x="643" y="891" width="1" height="1" stroke="none" fill="#ffffff"/><rect x="643" y="895" width="1" height="1" stroke="none" fill="#ffffff"/></g>
<g fill="none" stroke="#ffff00" stroke-width="1" shape-rendering="crispEdges"><path d="M852.5,116.5 L852.5,108.5 L856.5,108.5 L857.5,109.5 L857.5,110.5 L856.5,111.5 L852.5,111.5 M855.5,111.5 L857.5,116.5 M865.5,108.5 L860.5,108.5 L860.5,116.5 M860.5,111.5 L863.5,111.5"/><path d="M852.5,153.5 L852.5,160.5 L853.5,161.5 L856.5,161.5 L857.5,160.5 L857.5,153.5 M860.5,153.5 L860.5,161.5 M865.5,153.5 L860.5,158.5 M862.5,156.5 L865.5,161.5"/><path d="M852.5,330.5 L852.5,338.5 M857.5,330.5 L857.5,338.5 M852.5,333.5 L857.5,333.5 M860.5,338.5 L860.5,332.5 L862.5,330.5 L863.5,330.5 L865.5,332.5 L865.5,338.5 M860.5,335.5 L865.5,335.5"/><path d="M857.5,375.5 L856.5,374.5 L853.5,374.5 L852.5,375.5 L852.5,381.5 L853.5,382.5 L856.5,382.5 L857.5,381.5 L857.5,379.5 L855.5,379.5 M860.5,382.5 L860.5,374.5 L864.5,374.5 L865.5,375.5 L865.5,376.5 L864.5,377.5 L860.5,377.5 M863.5,377.5 L865.5,382.5"/><path d="M852.5,419.5 L856.5,419.5 L857.5,420.5 L857.5,421.5 L856.5,422.5 L852.5,422.5 M856.5,422.5 L857.5,424.5 L857.5,426.5 L856.5,427.5 L852.5,427.5 L852.5,419.5 M860.5,419.5 L863.5,419.5 L865.5,421.5 L865.5,425.5 L863.5,427.5 L860.5,427.5 L860.5,419.5"/><path d="M852.5,463.5 L852.5,471.5 M857.5,463.5 L857.5,471.5 M852.5,466.5 L857.5,466.5 M860.5,471.5 L860.5,463.5 L864.5,463.5 L865.5,464.5 L865.5,465.5 L864.5,466.5 L860.5,466.5 M863.5,466.5 L865.5,471.5"/><path d="M852.5,516.5 L852.5,508.5 L856.5,508.5 L857.5,509.5 L857.5,510.5 L856.5,511.5 L852.5,511.5 M855.5,511.5 L857.5,516.5 M860.5,516.5 L860.5,510.5 L862.5,508.5 L863.5,508.5 L865.5,510.5 L865.5,516.5 M860.5,513.5 L865.5,513.5"/><path d="M852.5,552.5 L852.5,560.5 L855.5,557.5 L857.5,560.5 L857.5,552.5 M865.5,553.5 L864.5,552.5 L861.5,552.5 L860.5,553.5 L860.5,554.5 L861.5,555.5 L864.5,555.5 L865.5,557.5 L865.5,559.5 L864.5,560.5 L861.5,560.5 L860.5,559.5"/><path d="M852.5,596.5 L855.5,596.5 L857.5,598.5 L857.5,602.5 L855.5,604.5 L852.5,604.5 L852.5,596.5 M865.5,597.5 L864.5,596.5 L861.5,596.5 L860.5,597.5 L860.5,598.5 L861.5,599.5 L864.5,599.5 L865.5,601.5 L865.5,603.5 L864.5,604.5 L861.5,604.5 L860.5,603.5"/><path d="M853.5,641.5 L856.5,641.5 M855.5,641.5 L855.5,649.5 M853.5,649.5 L856.5,649.5 M865.5,642.5 L864.5,641.5 L861.5,641.5 L860.5,642.5 L860.5,648.5 L861.5,649.5 L864.5,649.5 L865.5,648.5"/><path d="M857.5,686.5 L856.5,685.5 L853.5,685.5 L852.5,686.5 L852.5,692.5 L853.5,693.5 L856.5,693.5 L857.5,692.5 L857.5,690.5 L855.5,690.5 M865.5,686.5 L864.5,685.5 L861.5,685.5 L860.5,686.5 L860.5,692.5 L861.5,693.5 L864.5,693.5 L865.5,692.5"/><path d="M852.5,730.5 L856.5,730.5 L857.5,731.5 L857.5,732.5 L856.5,733.5 L852.5,733.5 M856.5,733.5 L857.5,735.5 L857.5,737.5 L856.5,738.5 L852.5,738.5 L852.5,730.5 M861.5,730.5 L864.5,730.5 M863.5,730.5 L863.5,738.5 M861.5,738.5 L864.5,738.5"/><path d="M852.5,782.5 L852.5,774.5 L857.5,782.5 L857.5,774.5 M860.5,774.5 L863.5,774.5 L865.5,776.5 L865.5,780.5 L863.5,782.5 L860.5,782.5 L860.5,774.5"/><path d="M868.5,55.5 L868.5,63.5 M873.5,55.5 L873.5,63.5 M868.5,58.5 L873.5,58.5 M876.5,55.5 L876.5,63.5 M881.5,55.5 L881.5,63.5 M876.5,58.5 L881.5,58.5 M889.5,56.5 L888.5,55.5 L885.5,55.5 L884.5,56.5 L884.5,62.5 L885.5,63.5 L888.5,63.5 L889.5,62.5"/><path d="M835.5,66.5 L834.5,65.5 L831.5,65.5 L830.5,66.5 L830.5,72.5 L831.5,73.5 L834.5,73.5 L835.5,72.5 M838.5,65.5 L838.5,73.5 L843.5,73.5 M846.5,73.5 L846.5,67.5 L848.5,65.5 L849.5,65.5 L851.5,67.5 L851.5,73.5 M846.5,70.5 L851.5,70.5 M859.5,66.5 L858.5,65.5 L855.5,65.5 L854.5,66.5 L854.5,67.5 L855.5,68.5 L858.5,68.5 L859.5,70.5 L859.5,72.5 L858.5,73.5 L855.5,73.5 L854.5,72.5"/><path d="M828.5,65.5 L825.5,65.5 L825.5,73.5 L828.5,73.5 M863.5,65.5 L866.5,65.5 L866.5,73.5 L863.5,73.5"/><path d="M716.5,14.5 L716.5,7.5 L721.5,14.5 L721.5,7.5 M728.5,7.5 L723.5,7.5 L723.5,14.5 L728.5,14.5 M723.5,10.5 L726.5,10.5 M730.5,7.5 L735.5,14.5 M735.5,7.5 L730.5,14.5 M737.5,7.5 L737.5,14.5 L742.5,14.5 M744.5,14.5 L744.5,9.5 L746.5,7.5 L747.5,7.5 L749.5,9.5 L749.5,14.5 M744.5,11.5 L749.5,11.5 M751.5,7.5 L755.5,7.5 L756.5,8.5 L756.5,9.5 L755.5,10.5 L751.5,10.5 M755.5,10.5 L756.5,11.5 L756.5,13.5 L755.5,14.5 L751.5,14.5 L751.5,7.5 M759.5,10.5 L762.5,10.5 M770.5,8.5 L769.5,7.5 L766.5,7.5 L765.5,8.5 L765.5,13.5 L766.5,14.5 L769.5,14.5 L770.5,13.5 M773.5,9.5 L776.5,9.5 L777.5,10.5 L777.5,13.5 L776.5,14.5 L773.5,14.5 L772.5,13.5 L772.5,10.5 L773.5,9.5 M782.5,7.5 L782.5,14.5 M789.5,7.5 L789.5,14.5 M793.5,11.5 L798.5,11.5 L798.5,10.5 L797.5,9.5 L794.5,9.5 L793.5,10.5 L793.5,13.5 L794.5,14.5 L798.5,14.5 M805.5,9.5 L805.5,15.5 L804.5,16.5 L801.5,16.5 M805.5,10.5 L804.5,9.5 L801.5,9.5 L800.5,10.5 L800.5,13.5 L801.5,14.5 L804.5,14.5 L805.5,13.5 M807.5,11.5 L812.5,11.5 L812.5,10.5 L811.5,9.5 L808.5,9.5 L807.5,10.5 L807.5,13.5 L808.5,14.5 L812.5,14.5 M822.5,9.5 L825.5,9.5 L826.5,10.5 L826.5,13.5 L825.5,14.5 L822.5,14.5 L821.5,13.5 L821.5,10.5 L822.5,9.5 M833.5,7.5 L831.5,7.5 L831.5,8.5 L831.5,14.5 M829.5,9.5 L832.5,9.5 M842.5,7.5 L845.5,7.5 L847.5,9.5 L847.5,12.5 L845.5,14.5 L842.5,14.5 L842.5,7.5 M849.5,9.5 L849.5,13.5 L850.5,14.5 L853.5,14.5 L854.5,13.5 M854.5,9.5 L854.5,14.5 M856.5,14.5 L856.5,7.5 L860.5,7.5 L861.5,8.5 L861.5,10.5 L860.5,11.5 L856.5,11.5 M863.5,9.5 L867.5,9.5 L868.5,10.5 L868.5,14.5 M868.5,11.5 L864.5,11.5 L863.5,12.5 L863.5,13.5 L864.5,14.5 L868.5,14.5 M875.5,9.5 L875.5,15.5 L874.5,16.5 L871.5,16.5 M875.5,10.5 L874.5,9.5 L871.5,9.5 L870.5,10.5 L870.5,13.5 L871.5,14.5 L874.5,14.5 L875.5,13.5 M877.5,11.5 L882.5,11.5 L882.5,10.5 L881.5,9.5 L878.5,9.5 L877.5,10.5 L877.5,13.5 L878.5,14.5 L882.5,14.5"/></g></g>
</svg>
</body></html>
